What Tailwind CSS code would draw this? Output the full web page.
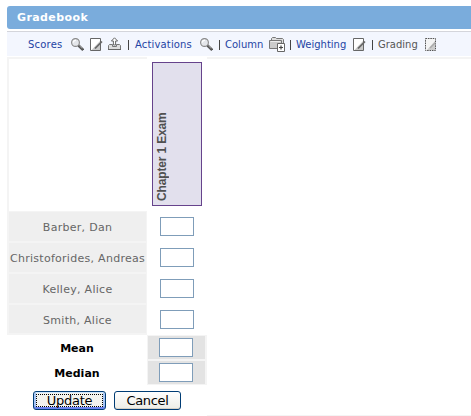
<!DOCTYPE html>
<html lang="en">
<head>
<meta charset="utf-8">
<title>Gradebook</title>
<script src="https://cdn.jsdelivr.net/npm/@tailwindcss/browser@4"></script>
</head>
<body class="bg-white w-[471px] h-[416px] overflow-hidden font-['DejaVu_Sans',sans-serif] text-[11px]">
<svg class="hidden">
  <symbol id="search" viewBox="0 0 13 13"><circle cx="4.5" cy="4.5" r="3.9" fill="#e4e6ea" stroke="#888" stroke-width="1.1"/><path d="M2.2 4.5Q2.8 2.3 5 2.2" fill="none" stroke="#fff" stroke-width="1.3"/><path d="M7.5 7.5L12.2 12" stroke="#555" stroke-width="2.6"/><path d="M8.3 7.6L11.3 10.5" stroke="#bbb" stroke-width=".8"/></symbol>
  <symbol id="edit" viewBox="0 0 13 13"><path d="M.5.5h10v12H.5z" fill="#fff" stroke="#666"/><path d="M10 3v9H1.5z" fill="#c8c8c8"/><path d="M12 3.5L6.5 9L5 10.5" fill="none" stroke="#666" stroke-width="1.7"/></symbol>
  <symbol id="export" viewBox="0 0 13 13"><path d="M.5 8.5L1.5 7.5h3v2h4v-2h3l1 1v4H.5z" fill="#ddd" stroke="#777"/><path d="M0 12.5h13" stroke="#666"/><path d="M6.5.8L9.6 4H7.6v4H5.4V4H3.4z" fill="#fff" stroke="#666"/></symbol>
  <symbol id="folder" viewBox="0 0 17 15"><path d="M2.5 3.5v-2l1-1h3l1 1h6l1 1v5" fill="#ddd" stroke="#777"/><path d="M.5 3.5h12v8H.5z" fill="#ccc" stroke="#777"/><path d="M1.5 4.5h10" stroke="#eee"/><path d="M8.5 6.5h7v8h-7z" fill="#fff" stroke="#666"/><path d="M10 10.5h4M12 8.5v4" stroke="#444" stroke-width="1.2"/></symbol>
</svg>
<header class="ml-[7px] mt-[6px] h-[23px] rounded-l-[3px] bg-[#7aacdc] pl-[10px] text-white font-bold leading-[23px] text-[11px]"><span class="tracking-[0.4px]">Gradebook</span></header>
<nav class="ml-[7px] mt-[2px] h-[25px] border-t border-[#d4d5db] bg-[#f3f6fe] flex text-[10px] leading-[26px] text-[#2444a4] whitespace-nowrap">
  <span class="ml-[21px] w-[43px] tracking-[0.2px]">Scores</span>
  <svg class="w-[13px] h-[13px] mt-[6px]"><use href="#search"/></svg>
  <svg class="w-[13px] h-[13px] mt-[6px] ml-[6px]"><use href="#edit"/></svg>
  <svg class="w-[13px] h-[13px] mt-[5px] ml-[5px]"><use href="#export"/></svg>
  <i class="w-px h-[10px] bg-[#444] mt-[8px] ml-[7px]"></i>
  <span class="ml-[6px] w-[65px] tracking-[0.15px]">Activations</span>
  <svg class="w-[13px] h-[13px] mt-[6px]"><use href="#search"/></svg>
  <i class="w-px h-[10px] bg-[#444] mt-[8px] ml-[6px]"></i>
  <span class="ml-[6px] w-[43px] -indent-px">Column</span>
  <svg class="w-[17px] h-[15px] mt-[5px]"><use href="#folder"/></svg>
  <i class="w-px h-[10px] bg-[#444] mt-[8px] ml-[4px]"></i>
  <span class="ml-[6px] w-[56px] -indent-px">Weighting</span>
  <svg class="w-[13px] h-[13px] mt-[6px]"><use href="#edit"/></svg>
  <i class="w-px h-[10px] bg-[#444] mt-[8px] ml-[6px]"></i>
  <span class="ml-[6px] w-[46px] text-[#555] -indent-px">Grading</span>
  <svg class="w-[13px] h-[13px] mt-[6px]" viewBox="0 0 13 13"><path d="M.5.5h10v12H.5z" fill="#f4f4f4" stroke="#555" stroke-dasharray="1.6 .8"/><path d="M10 3v9H2z" fill="#ccc"/><path d="M10.5 4.5L5 10" stroke="#aaa" stroke-width="1.5"/></svg>
</nav>
<main class="ml-[7px] mt-[1px] h-[359px] flex">
  <section class="w-[200px]">
    <div class="flex h-[278px]">
      <div class="w-[140px] border-l-2 border-t-2 border-r border-[#f4f4f4] text-center text-[#666] text-[11px] tracking-[0.28px] whitespace-nowrap">
        <div class="h-[152px] bg-white -mr-px"></div>
        <div class="border-t border-[#f4f4f4] bg-[#efefef] h-[30px] leading-[32px]">Barber, Dan</div>
        <div class="border-t-2 border-[#f4f4f4] bg-[#efefef] h-[31px] leading-[31px]">Christoforides, Andreas</div>
        <div class="border-t-2 border-[#f4f4f4] bg-[#efefef] h-[31px] leading-[32px]">Kelley, Alice</div>
        <div class="border-y-2 border-[#f4f4f4] bg-[#efefef] h-[32px] leading-[32px]">Smith, Alice</div>
      </div>
      <div class="w-[60px] pt-[5px] pl-[5px]">
        <div class="w-[50px] h-[144px] border border-[#66438c] bg-[#e2e0ed]">
          <div class="[writing-mode:vertical-rl] rotate-180 h-[142px] w-[19px] pt-[4px] leading-[19px] text-[12px] tracking-[-0.15px] font-bold text-[#505050] font-['Liberation_Sans',sans-serif] whitespace-nowrap">Chapter 1 Exam</div>
        </div>
        <div class="ml-[8px] mt-[11px] flex flex-col gap-[12px]">
          <input aria-label="Barber, Dan" class="block w-[34px] h-[19px] border border-[#7f9db9] bg-white">
          <input aria-label="Christoforides, Andreas" class="block w-[34px] h-[19px] border border-[#7f9db9] bg-white">
          <input aria-label="Kelley, Alice" class="block w-[34px] h-[19px] border border-[#7f9db9] bg-white">
          <input aria-label="Smith, Alice" class="block w-[34px] h-[19px] border border-[#7f9db9] bg-white">
        </div>
      </div>
    </div>
    <div class="flex h-[50px]">
      <div class="w-[140px] text-center font-bold text-[11px] text-black leading-[25px] pt-px"><div>Mean</div><div>Median</div></div>
      <div class="w-[60px] bg-[#f4f4f4] pl-px pt-px flex flex-col gap-[2px]">
        <div class="w-[57px] h-[23px] bg-[#e3e3e3] pl-[11px] pt-[2px]"><input aria-label="Mean" class="block w-[34px] h-[19px] border border-[#7f9db9] bg-white"></div>
        <div class="w-[57px] h-[23px] bg-[#e3e3e3] pl-[11px] pt-[2px]"><input aria-label="Median" class="block w-[34px] h-[19px] border border-[#7f9db9] bg-white"></div>
      </div>
    </div>
    <div class="flex gap-[8px] pl-[26px] pt-[6px] text-[13px] text-black">
      <button class="w-[73px] h-[19px] rounded-[3px] border border-[#003c74] bg-[#f3f3ee] shadow-[inset_0_-2px_0_#6982ee,inset_0_1px_0_#cee7ff,inset_2px_0_0_#a6c5f5,inset_-2px_0_0_#a6c5f5] p-[2px]"><span class="block h-[13px] border border-dotted border-black leading-[11px] tracking-[-0.3px]">Update</span></button>
      <button class="w-[67px] h-[19px] rounded-[3px] border border-[#003c74] bg-linear-to-b from-white to-[#eeede6] shadow-[inset_0_-1px_0_#d6d0c5] leading-[17px] tracking-[-0.3px]">Cancel</button>
    </div>
  </section>
  <section class="flex-1 border-t-2 border-b border-[#f4f4f4]"></section>
</main>
</body>
</html>
